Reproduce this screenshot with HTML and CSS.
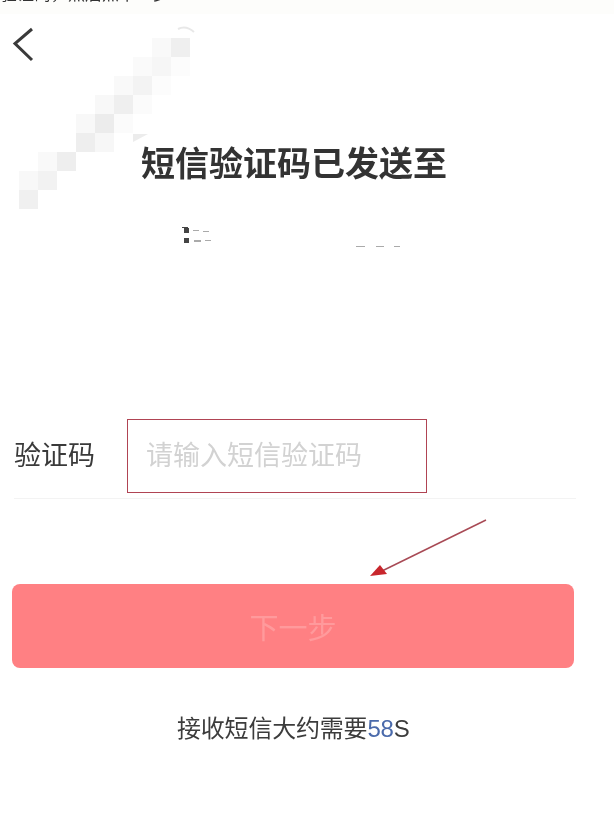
FILE: index.html
```html
<!DOCTYPE html>
<html lang="zh-CN">
<head>
    <meta charset="UTF-8">
    <meta name="viewport" content="width=device-width, initial-scale=1.0">
    <title>短信验证码</title>
    <link rel="stylesheet" href="styles.css">
</head>
<body>
    <div id="page">
        <div class="caption"><span>验证码，然后点下一步</span></div>
        <div class="nav">
            <svg class="back" width="22" height="36" viewBox="0 0 22 36">
                <path d="M20 2 L3 16.5 L20 33" fill="none" stroke="#3a3a3a" stroke-width="3"/>
            </svg>
        </div>
        <h1 class="title">短信验证码已发送至</h1>
        <div class="field">
            <label class="label">验证码</label>
            <input class="code" type="text" placeholder="请输入短信验证码">
        </div>
        <button class="next">下一步</button>
        <p class="hint">接收短信大约需要<span class="count">58</span>S</p>

        <!-- 打码部分 -->
        <svg class="mosaic" width="214" height="230" viewBox="0 0 214 230">
            <g transform="translate(-19 -19)">
                <path d="M178 29 Q186 25 194 32" fill="none" stroke="#e8e8e8" stroke-width="2"/>
                <rect x="19" y="190" width="19" height="19" fill="#f0f0f0"/>
                <rect x="19" y="171" width="19" height="19" fill="#f8f8f8"/>
                <rect x="38" y="171" width="19" height="19" fill="#f2f2f2"/>
                <rect x="38" y="152" width="19" height="19" fill="#f9f9f9"/>
                <rect x="57" y="152" width="19" height="19" fill="#eeeeee"/>
                <rect x="76" y="133" width="19" height="19" fill="#eeeeee"/>
                <rect x="95" y="133" width="19" height="19" fill="#f7f7f7"/>
                <rect x="76" y="114" width="19" height="19" fill="#f8f8f8"/>
                <rect x="95" y="114" width="19" height="19" fill="#ececec"/>
                <rect x="114" y="114" width="19" height="19" fill="#fbfbfb"/>
                <rect x="95" y="95" width="19" height="19" fill="#f8f8f8"/>
                <rect x="114" y="95" width="19" height="19" fill="#efefef"/>
                <rect x="133" y="95" width="19" height="19" fill="#fbfbfb"/>
                <rect x="114" y="76" width="19" height="19" fill="#f9f9f9"/>
                <rect x="133" y="76" width="19" height="19" fill="#f3f3f3"/>
                <rect x="152" y="76" width="19" height="19" fill="#fcfcfc"/>
                <rect x="133" y="57" width="19" height="19" fill="#fafafa"/>
                <rect x="152" y="57" width="19" height="19" fill="#f6f6f6"/>
                <rect x="171" y="57" width="19" height="19" fill="#fcfcfc"/>
                <rect x="152" y="38" width="19" height="19" fill="#f9f9f9"/>
                <rect x="171" y="38" width="19" height="19" fill="#efefef"/>
                <path d="M133 142 V134 H148 Z" fill="#ececec"/>
            </g>
        </svg>
        <svg class="phone" width="230" height="24" viewBox="0 0 230 24">
            <g fill="#444">
                <rect x="1" y="1" width="6" height="1"/>
                <rect x="3" y="2" width="5" height="5"/>
                <rect x="3" y="12" width="5" height="5"/>
            </g>
            <g fill="#aaa">
                <rect x="12" y="4" width="6" height="1"/>
                <rect x="22" y="5" width="6" height="1"/>
                <rect x="13" y="14" width="7" height="2"/>
                <rect x="24" y="14" width="6" height="1"/>
                <rect x="175" y="20" width="9" height="1"/>
                <rect x="195" y="20" width="8" height="1"/>
                <rect x="213" y="20" width="6" height="1"/>
            </g>
        </svg>
        <svg class="arrow" width="124" height="62" viewBox="0 0 124 62">
            <path d="M118 2 L14 53" stroke="#a84a55" stroke-width="1.5" fill="none"/>
            <path d="M2 58 L12 47 L19 56 Z" fill="#c8262c"/>
        </svg>
    </div>
</body>
</html>
```
FILE: styles.css
```css
*{
    box-sizing: border-box;
}
body{
    margin: 0;
    background: #fff;
    color: #333;
    font-family: "Liberation Sans", "Noto Sans CJK SC", sans-serif;
}
#page{
    position: relative;
    width: 614px;
    height: 815px;
    overflow: hidden;
    filter: blur(0.4px);
}
.caption{
    height: 14px;
    overflow: hidden;
    background: #fdfdfb;
    font-size: 17px;
    line-height: 17px;
}
.caption span{
    display: block;
    margin-top: -14px;
}
.nav{
    height: 46px;
    padding: 13px 0 0 12px;
}
.back{
    display: block;
}
.title{
    margin: 82px 0 0;
    padding-left: 141px;
    font-size: 34px;
    line-height: 44px;
    font-weight: bold;
    color: #333;
}
.field{
    display: flex;
    align-items: center;
    width: 562px;
    height: 80px;
    margin: 233px 0 0 14px;
    padding-bottom: 5px;
    border-bottom: 1px solid #f3f3f3;
}
.label{
    width: 113px;
    margin-bottom: 6px;
    font-size: 27px;
    color: #3a3a3a;
}
.code{
    width: 300px;
    height: 74px;
    padding: 0 0 0 18px;
    border: 1.5px solid #b04453;
    outline: none;
    background: #fff;
    font-family: inherit;
    font-size: 27px;
}
.code::placeholder{
    color: #d2d2d2;
}
.next{
    display: block;
    width: 562px;
    height: 84px;
    margin: 85px 0 0 12px;
    border: none;
    border-radius: 8px;
    background: #ff8083;
    color: #ff9a9c;
    font-family: inherit;
    font-size: 29px;
}
.hint{
    margin: 45px 0 0;
    padding-left: 177px;
    font-size: 24px;
    line-height: 32px;
    letter-spacing: -0.2px;
    color: #3c3c3c;
}
.count{
    color: #4a6aab;
}
.mosaic{
    position: absolute;
    left: 19px;
    top: 19px;
}
.phone{
    position: absolute;
    left: 181px;
    top: 226px;
}
.arrow{
    position: absolute;
    left: 368px;
    top: 518px;
}
```
